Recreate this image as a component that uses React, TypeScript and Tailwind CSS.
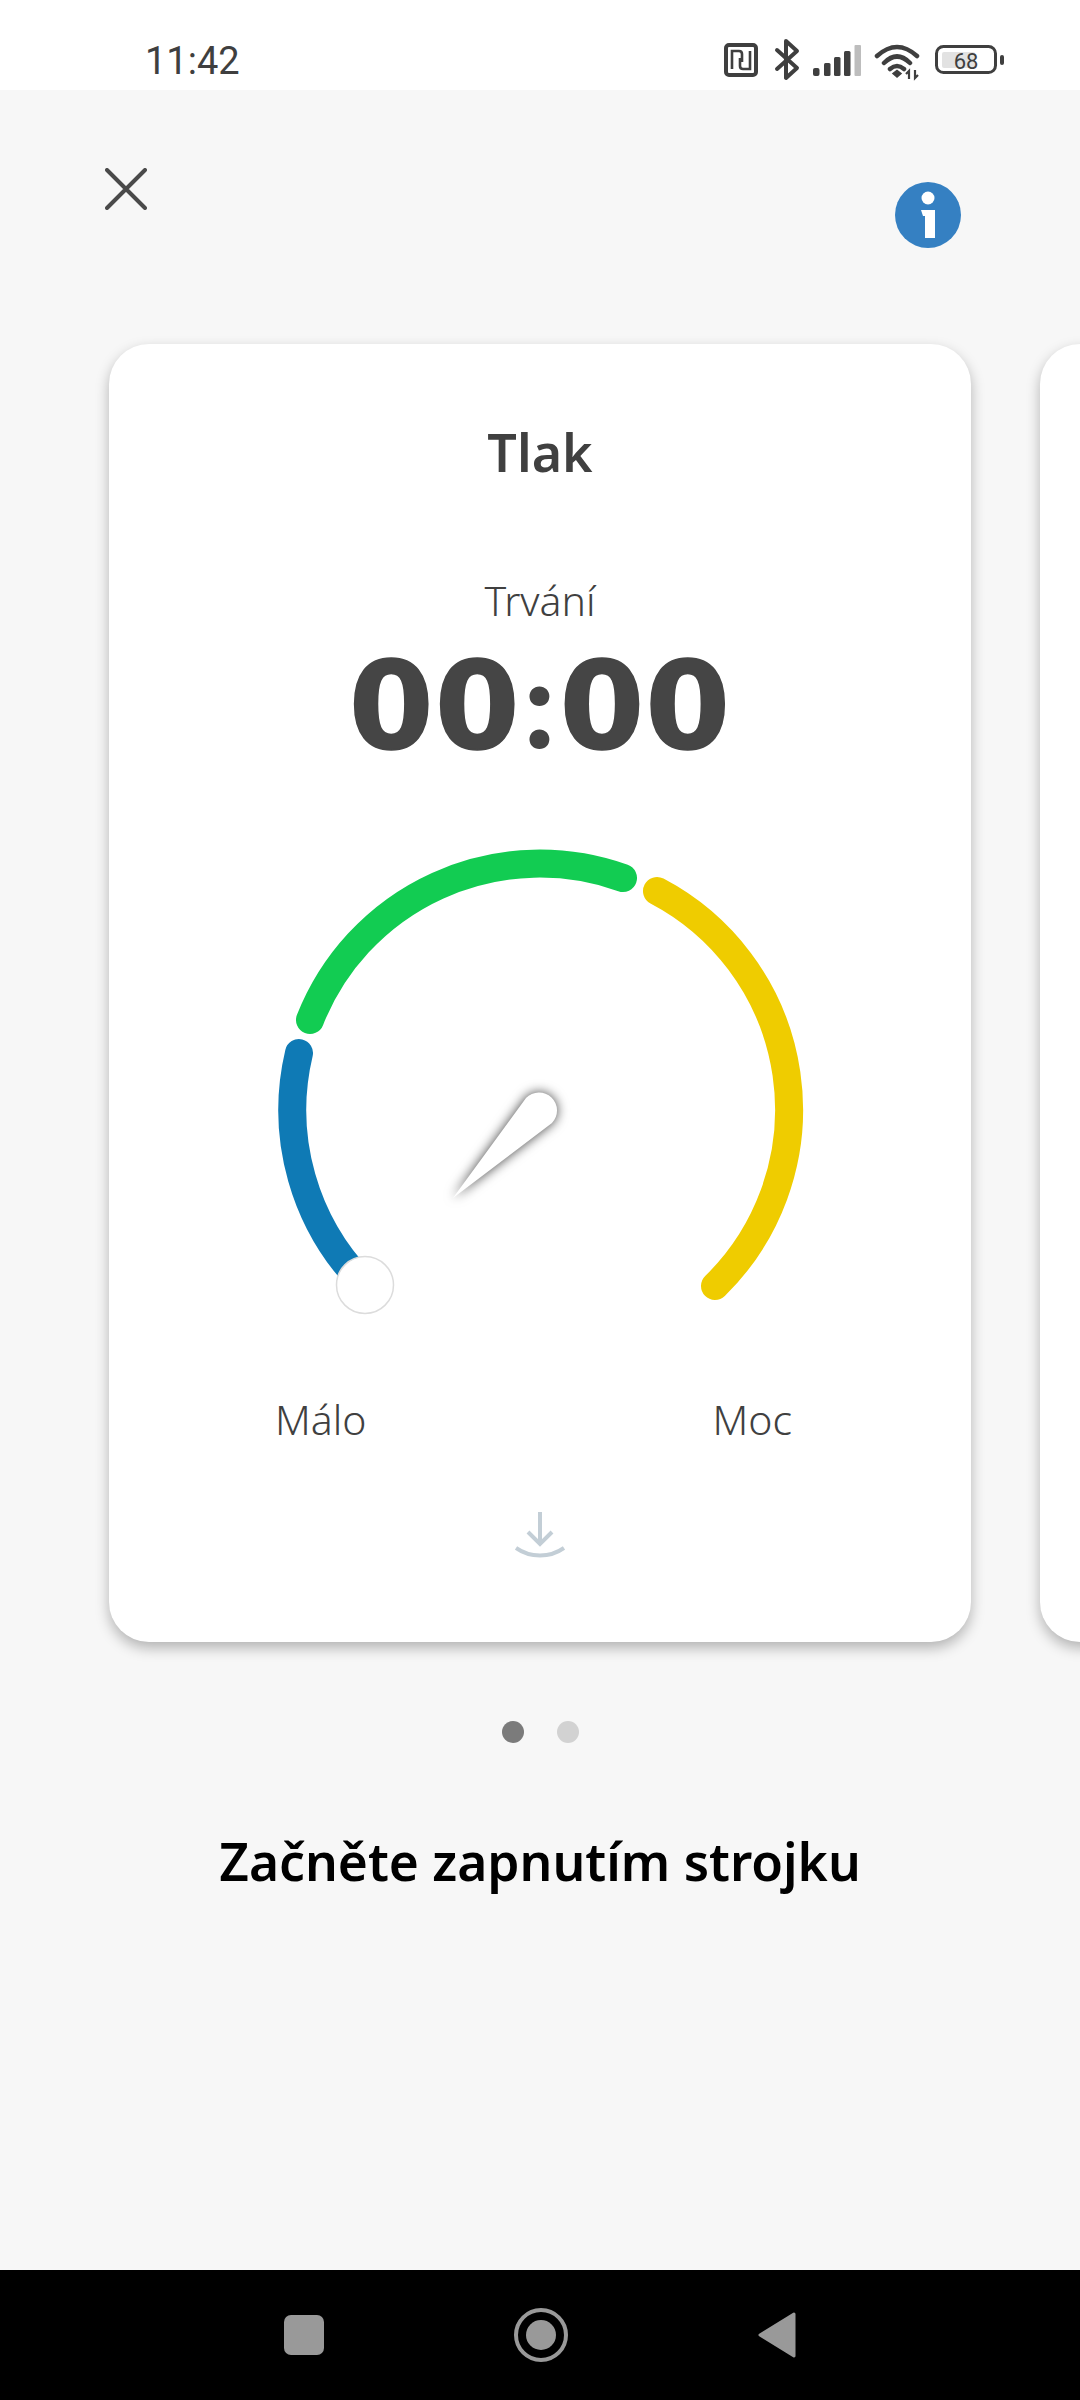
const font = "font-['Noto_Sans','Open_Sans',sans-serif]";

function StatusIcons() {
  return (
    <svg width="290" height="44" viewBox="0 0 290 44" className="text-[#3f3f3f]" fill="none">
      {/* nfc */}
      <rect x="6" y="7" width="30" height="30" rx="3" stroke="currentColor" strokeWidth="4" />
      <path d="M12 31V13h7c2 0 3 1 3 3v8M30 13v18h-7c-2 0-3-1-3-3v-8" stroke="currentColor" strokeWidth="2.600" />
      {/* bluetooth */}
      <path d="M57 12l20 18-11 10V3l11 10-20 18" stroke="currentColor" strokeWidth="4" strokeLinejoin="round" strokeLinecap="round" />
      {/* signal */}
      <rect x="93" y="30" width="6.500" height="8" rx="2" fill="currentColor" />
      <rect x="104" y="25" width="6.500" height="13" rx="1.500" fill="currentColor" />
      <rect x="114" y="19" width="6.500" height="19" rx="1.500" fill="currentColor" />
      <rect x="124" y="13" width="6.500" height="25" rx="1.500" fill="currentColor" />
      <rect x="134.500" y="7" width="6.500" height="31" rx="1" fill="#bdbdbd" />
      {/* wifi */}
      <path d="M157 18Q177 0 197 18M164 25Q177 12 190 25M170 31Q177 25 184 31" stroke="currentColor" strokeWidth="4.500" strokeLinecap="round" />
      <path d="M177 39l-4-3.500 4-3 4 3z" fill="currentColor" stroke="currentColor" strokeWidth="1.500" />
      <path d="M189 41v-8l-3 3M195 32v8l3-3" stroke="currentColor" strokeWidth="2.200" />
      {/* battery */}
      <rect x="216.500" y="8.500" width="59" height="26" rx="7" stroke="currentColor" strokeWidth="3" />
      <rect x="222" y="14" width="33" height="16" rx="2" fill="#e2e2e2" />
      <rect x="280" y="17" width="4" height="10" rx="2" fill="currentColor" />
      <text x="246" y="31" textAnchor="middle" fontFamily="Roboto, sans-serif" fontSize="22" fill="currentColor">68</text>
    </svg>
  );
}

function Gauge() {
  const a = (x1: number, y1: number, x2: number, y2: number) => `M${x1} ${y1}A247 247 0 0 1 ${x2} ${y2}`;
  return (
    <svg width="540" height="480" viewBox="270 840 540 480" fill="none">
      <g strokeWidth="28" strokeLinecap="round">
        <path d={a(365, 1284, 299, 1052)} stroke="#0f7ab5" />
        <path d={a(310, 1019, 623, 877)} stroke="#12cc52" />
        <path d={a(657, 890, 715, 1285)} stroke="#efcc00" />
      </g>
      <path
        d="M453 1197L526 1097A18 18 0 0 1 552 1122Z"
        fill="#fff"
        className="drop-shadow-[0_0_6px_rgba(0,0,0,0.75)]"
      />
      <circle cx="365" cy="1284" r="28.500" fill="#fff" stroke="#dcdcdc" strokeWidth="1.500" />
    </svg>
  );
}

export default function App() {
  return (
    <div className={`w-[1080px] h-[2400px] flex flex-col overflow-hidden bg-[#f7f7f7] ${font}`}>
      <div className="h-[90px] bg-white shrink-0 flex items-start justify-between pl-[145px] pr-[70px]">
        <span className="mt-[38px] text-[38px] leading-[46px] text-[#3f3f3f] font-['Roboto',sans-serif]">11:42</span>
        <div className="mt-[38px]">
          <StatusIcons />
        </div>
      </div>

      <div className="flex-1 relative">
        <div className="flex justify-between items-start pl-[105px] pr-[119px]">
          <svg width="42" height="42" viewBox="0 0 42 42" className="mt-[78px]" stroke="#4a4a4a" strokeWidth="4" strokeLinecap="round">
            <path d="M2 2l38 38M40 2L2 40" />
          </svg>
          <svg width="66" height="66" viewBox="0 0 66 66" className="mt-[92px]">
            <circle cx="33" cy="33" r="33" fill="#3580c2" />
            <circle cx="33" cy="16" r="6.500" fill="#fff" />
            <path d="M26 28h14v28H30V34h-2z" fill="#fff" />
          </svg>
        </div>

        <div className="mt-[96px] flex gap-[69px] pl-[109px]">
          <div className="w-[862px] h-[1298px] shrink-0 bg-white rounded-[40px] shadow-[0_6px_14px_rgba(0,0,0,0.28)] flex flex-col items-center">
            <h1 className="mt-[74px] text-[52px] leading-[68px] font-semibold text-[#404040]">Tlak</h1>
            <p className="mt-[88px] text-[41px] leading-[52px] font-light text-[#404040]">Trvání</p>
            <p className="mt-[17px] text-[122px] leading-[116px] font-bold text-[#454545] tracking-[1px] [-webkit-text-stroke:1.5px_#454545] font-['DejaVu_Sans',sans-serif]">
              00<span className="mx-[3px] font-black [-webkit-text-stroke:0] font-['Lato',sans-serif]">:</span>00
            </p>
            <div className="mt-[77px]">
              <Gauge />
            </div>
            <div className="w-full flex justify-between pl-[166px] pr-[179px] mt-[72px]">
              <span className="text-[41px] leading-[52px] font-light text-[#404040]">Málo</span>
              <span className="text-[41px] leading-[52px] font-light text-[#404040]">Moc</span>
            </div>
            <svg width="50" height="46" viewBox="0 0 50 46" className="mt-[67px]" fill="none" stroke="#c3ced6" strokeWidth="4">
              <path d="M25 0v32M13 20l12 12 12-12" />
              <path d="M1 36c14 10 34 10 48 0" />
            </svg>
          </div>
          <div className="w-[862px] h-[1298px] shrink-0 bg-white rounded-[40px] shadow-[0_6px_14px_rgba(0,0,0,0.28)]" />
        </div>

        <div className="mt-[79px] flex justify-center gap-[33px]">
          <span className="w-[22px] h-[22px] rounded-full bg-[#7b7b7b]" />
          <span className="w-[22px] h-[22px] rounded-full bg-[#d2d2d2]" />
        </div>

        <p className="mt-[84px] text-center text-[51.500px] leading-[68px] font-semibold text-black">Začněte zapnutím strojku</p>
      </div>

      <div className="h-[130px] bg-black shrink-0 flex items-center justify-center gap-[190px]">
        <span className="w-[40px] h-[40px] rounded-[7px] bg-[#999999]" />
        <span className="w-[54px] h-[54px] rounded-full border-[4px] border-[#999999] flex items-center justify-center">
          <span className="w-[30px] h-[30px] rounded-full bg-[#999999]" />
        </span>
        <svg width="38" height="48" viewBox="0 0 38 48">
          <path d="M36 3L2 24l34 21z" fill="#999999" stroke="#999999" strokeWidth="3" strokeLinejoin="round" />
        </svg>
      </div>
    </div>
  );
}
